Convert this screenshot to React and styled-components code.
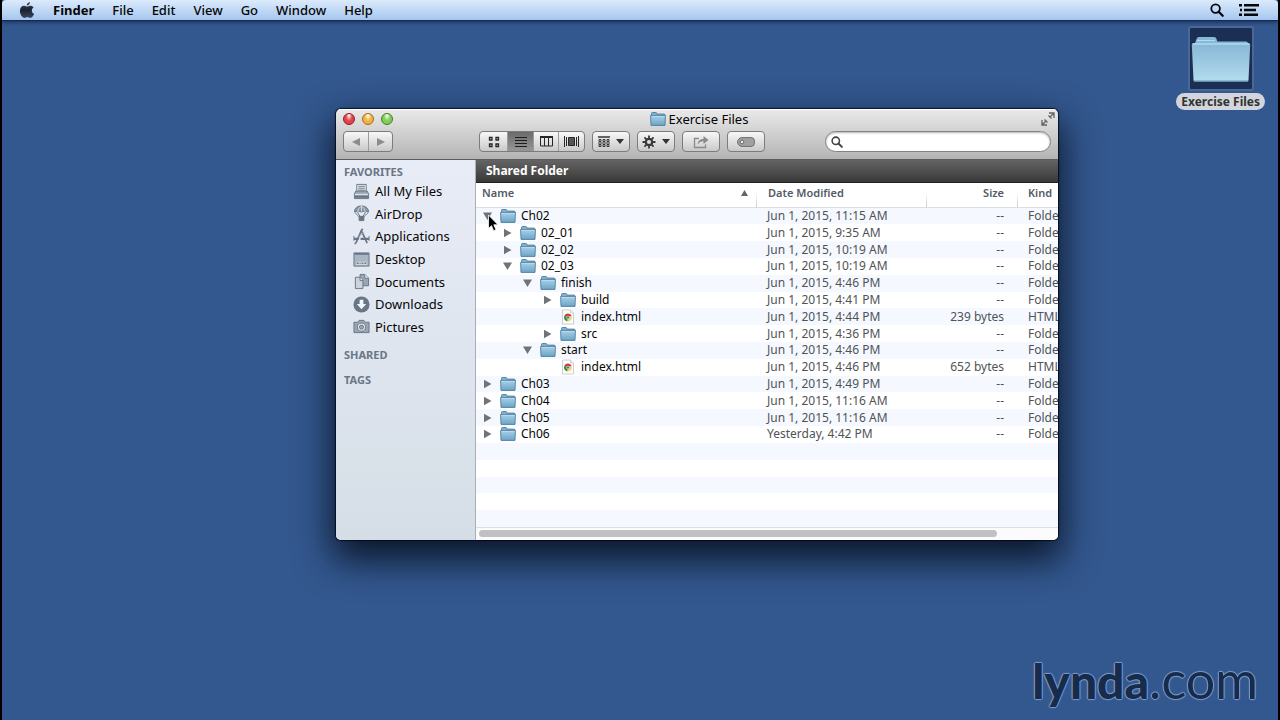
import React from 'react';
import styled, { createGlobalStyle } from 'styled-components';

const menus = ['File', 'Edit', 'View', 'Go', 'Window', 'Help'];

const favorites = [
  { name: 'All My Files', icon: 'allfiles' },
  { name: 'AirDrop', icon: 'airdrop' },
  { name: 'Applications', icon: 'apps' },
  { name: 'Desktop', icon: 'desktop' },
  { name: 'Documents', icon: 'documents' },
  { name: 'Downloads', icon: 'downloads' },
  { name: 'Pictures', icon: 'pictures' }
];

const files = [
  { name: 'Ch02', depth: 0, open: true, date: 'Jun 1, 2015, 11:15 AM' },
  { name: '02_01', depth: 1, date: 'Jun 1, 2015, 9:35 AM' },
  { name: '02_02', depth: 1, date: 'Jun 1, 2015, 10:19 AM' },
  { name: '02_03', depth: 1, open: true, date: 'Jun 1, 2015, 10:19 AM' },
  { name: 'finish', depth: 2, open: true, date: 'Jun 1, 2015, 4:46 PM' },
  { name: 'build', depth: 3, date: 'Jun 1, 2015, 4:41 PM' },
  { name: 'index.html', depth: 3, size: '239 bytes', date: 'Jun 1, 2015, 4:44 PM' },
  { name: 'src', depth: 3, date: 'Jun 1, 2015, 4:36 PM' },
  { name: 'start', depth: 2, open: true, date: 'Jun 1, 2015, 4:46 PM' },
  { name: 'index.html', depth: 3, size: '652 bytes', date: 'Jun 1, 2015, 4:46 PM' },
  { name: 'Ch03', depth: 0, date: 'Jun 1, 2015, 4:49 PM' },
  { name: 'Ch04', depth: 0, date: 'Jun 1, 2015, 11:16 AM' },
  { name: 'Ch05', depth: 0, date: 'Jun 1, 2015, 11:16 AM' },
  { name: 'Ch06', depth: 0, date: 'Yesterday, 4:42 PM' }
];

// blank striped rows under the last file
const blankRows = [0, 1, 2, 3, 4];

const Folder = ({ size }) => (
  <svg width={size} height={size} viewBox="0 0 16 16" aria-hidden="true">
    <path d="M1.500 4V2.500q0-1 1-1h3.300q.8 0 1 .9l.2.7h7q1 0 1 1v1H1.500z" fill="#7fb0cf" stroke="#4c7c9d" strokeWidth=".9" />
    <path d="M.6 4.500h14.800l-.4 9.900H1z" fill="url(#folderFill)" stroke="#4c7c9d" strokeWidth=".9" />
    <path d="M1.300 5.300h13.400" stroke="#c9e4f2" strokeWidth=".7" />
  </svg>
);

const HtmlFile = () => (
  <svg width="16" height="16" viewBox="0 0 16 16" aria-hidden="true">
    <path d="M2.500 1h8l3 3v11h-11z" fill="#fdfdfd" stroke="#c4c4c4" strokeWidth=".8" />
    <path d="M10.500 1v3h3" fill="#eee" stroke="#c4c4c4" strokeWidth=".7" />
    <path d="M8 8.500L4.500 6.500A4 4 0 0 1 11.600 6.800z" fill="#c93a2b" />
    <path d="M8 8.500L4.500 6.500A4 4 0 0 0 7.500 12.400z" fill="#3c8a44" />
    <path d="M8 8.500l3.600-1.700a4 4 0 0 1-4.100 5.600z" fill="#f3d36c" />
    <circle cx="8" cy="8.500" r="1.500" fill="#4a6f9c" stroke="#fff" strokeWidth=".5" />
  </svg>
);

const Search = ({ size, color }) => (
  <svg width={size} height={size} viewBox="0 0 14 14" fill="none" stroke={color} aria-hidden="true">
    <circle cx="5.600" cy="5.600" r="4.300" strokeWidth="1.800" />
    <path d="M8.700 8.700l4 4" strokeWidth="2.300" strokeLinecap="round" />
  </svg>
);

const sideIcons = {
  allfiles: (
    <g fill="none" stroke="#687585">
      <path d="M4 1.500h10v8H4z" fill="#edf1f5" />
      <path d="M5.500 3.500h7M5.500 5.500h7M5.500 7.500h7" />
      <path d="M3 8.500l-1.500 3v5h15v-5l-1.500-3z" fill="#98a5b4" />
      <path d="M2 12h14" stroke="#edf1f5" />
      <path d="M2 14.500h14" strokeWidth="2" />
    </g>
  ),
  airdrop: (
    <g fill="none" stroke="#687585">
      <path d="M1.500 7.500C1.500 3 5 1 9 1s7.500 2 7.500 6.500q-2-1.500-3.600 0Q11 6 9 7.500 7 6 5 7.500q-1.500-1.500-3.500 0z" fill="#8794a4" />
      <path d="M9 1Q5 3.500 5 7.500M9 1q4 2.500 4 6.500M9 1v6" stroke="#e6ebf0" strokeWidth=".8" />
      <path d="M2 8l5 5M16 8l-5 5M5 8l3 5M13 8l-3 5" />
      <path d="M6.500 12h5v4.500h-5z" fill="#687585" />
    </g>
  ),
  apps: (
    <g fill="none" stroke="#687585" strokeWidth="1.800">
      <path d="M3 16L9.200 2M8.500 2L15 16" />
      <path d="M1 11.500h5M8 11.500h9" strokeWidth="2.400" />
      <path d="M9 2l1.500-1M2.500 16l-.5 1" />
      <path d="M1 8.500v5M17 8.500v5" strokeWidth="1" />
      <path d="M6 9.500l5-5" stroke="#a7b2be" strokeWidth="1" />
    </g>
  ),
  desktop: (
    <g fill="none" stroke="#687585">
      <path d="M1 2h16v14H1z" fill="#a9b5c1" />
      <path d="M1.500 3h15" strokeWidth="2" />
      <path d="M3 14.500h12l-1-3H4z" fill="#dce3e9" stroke="none" />
      <path d="M4 13h2M7 13h1M9 13h2M12 13h2" strokeWidth="1.500" />
    </g>
  ),
  documents: (
    <g stroke="#687585">
      <path d="M7.500 1.500h5l4 4v8h-9z" fill="#98a5b4" />
      <path d="M12.500 1.500v4h4" fill="#edf1f5" />
      <path d="M2.500 4.500h5l3 3v9h-8z" fill="#cbd3dc" />
      <path d="M7.500 4.500v3.500h3" fill="#edf1f5" />
    </g>
  ),
  downloads: (
    <g>
      <circle cx="9" cy="9" r="8.500" fill="#687585" />
      <path d="M7 4h4v4.500h3L9 14 4 8.500h3z" fill="#f3f5f8" />
    </g>
  ),
  pictures: (
    <g stroke="#687585">
      <path d="M1 4.500h4l1.500-2h5l1.500 2h4v11H1z" fill="#98a5b4" />
      <circle cx="9" cy="9.700" r="4.300" fill="#e4e9ee" />
      <circle cx="9" cy="9.700" r="2.200" fill="#98a5b4" />
    </g>
  )
};

const App = () => (
  <Desktop>
    <GlobalStyle />
    <Defs width="0" height="0" aria-hidden="true">
      <defs>
        <linearGradient id="folderFill" x1="0" y1="0" x2="0" y2="1">
          <stop offset="0" stopColor="#a9d1e8" />
          <stop offset="1" stopColor="#6ca4c6" />
        </linearGradient>
        <linearGradient id="bigFolder" x1="0" y1="0" x2="0" y2="1">
          <stop offset="0" stopColor="#86b7d6" />
          <stop offset="1" stopColor="#b3dcee" />
        </linearGradient>
        <linearGradient id="appleFill" x1="0" y1="0" x2="0" y2="1">
          <stop offset="0" stopColor="#39465c" />
          <stop offset=".5" stopColor="#1b2333" />
          <stop offset="1" stopColor="#3a465e" />
        </linearGradient>
      </defs>
    </Defs>

    <MenuBar>
      <Apple type="button" aria-label="Apple">
        <svg width="16" height="18" viewBox="0 0 16 18">
          <path d="M10.900 1c.2 1.800-1.300 3.600-3.100 3.600C7.600 2.900 9.200 1.200 10.900 1zM8.200 5.600c.7 0 1.600-.9 3.100-.9 1.400 0 2.600.7 3.300 1.700-2.700 1.600-2.200 5.400.6 6.400-.6 1.700-2.200 4.200-3.800 4.200-1.200 0-1.600-.7-3-.7s-1.900.7-3 .7C3.300 17 .9 13.100.9 10c0-3.300 2.100-5.200 4.200-5.200 1.400 0 2.400.8 3.100.8z" fill="url(#appleFill)" />
        </svg>
      </Apple>
      <MenuItem type="button" $bold>Finder</MenuItem>
      {menus.map((menu) => (
        <MenuItem type="button" key={menu}>{menu}</MenuItem>
      ))}
      <MenuExtras>
        <IconButton type="button" aria-label="Spotlight"><Search size={14} color="#05070c" /></IconButton>
        <IconButton type="button" aria-label="Notifications">
          <svg width="20" height="14" viewBox="0 0 20 14" stroke="#05070c" strokeWidth="2.600">
            <path d="M0 2.200h3M5 2.200h15M1 7h2M5 7h12M0 11.800h3M5 11.800h14" />
          </svg>
        </IconButton>
      </MenuExtras>
    </MenuBar>

    <DesktopIcon href="#exercise-files">
      <IconFrame>
        <svg width="60" height="46" viewBox="0 0 60 46" aria-hidden="true">
          <path d="M3 10L5.500 3Q6 1 8 1h15q2 0 2.500 2l.8 2.500H55q2 0 2 2V12H3z" fill="#86b9d7" />
          <path d="M6 4.500h18" stroke="#b7dbed" />
          <path d="M.8 8.500Q.8 7 2.500 7h55q1.700 0 1.700 1.500L57.500 44q0 1.500-1.500 1.500H4q-1.500 0-1.500-1.500z" fill="url(#bigFolder)" />
          <path d="M2 8h56" stroke="#cbe8f5" />
          <path d="M3 45h54" stroke="#6593b1" />
        </svg>
      </IconFrame>
      <IconLabel>Exercise Files</IconLabel>
    </DesktopIcon>

    <Window>
      <WindowHeader>
        <TitleRow>
          <Lights>
            <Light type="button" aria-label="Close" $color="#e2434b" $edge="#8d2229" />
            <Light type="button" aria-label="Minimize" $color="#f3b23f" $edge="#a06c1c" />
            <Light type="button" aria-label="Zoom" $color="#7fce55" $edge="#467f2b" />
          </Lights>
          <Title><Folder size={16} />Exercise Files</Title>
          <FullScreen type="button" aria-label="Full screen">
            <svg width="14" height="14" viewBox="0 0 14 14" fill="none" stroke="#636363" strokeWidth="1.300">
              <path d="M8 1h5v5M13 1L8.500 5.500M7.500 3.500l3 3" />
              <path d="M1 8v5h5M1 13l4.500-4.500M3.500 7.500l3 3" />
            </svg>
          </FullScreen>
        </TitleRow>
        <Toolbar>
          <Group>
            <Segment type="button" aria-label="Back" $width={24}>
              <svg width="10" height="10" viewBox="0 0 10 10"><path d="M9 1v8L1 5z" fill="#8c8c8c" /></svg>
            </Segment>
            <Segment type="button" aria-label="Forward" $width={24}>
              <svg width="10" height="10" viewBox="0 0 10 10"><path d="M1 1v8l8-4z" fill="#8c8c8c" /></svg>
            </Segment>
          </Group>
          <ViewTools>
            <Group>
              <Segment type="button" aria-label="Icon view" $width={27}>
                <svg width="12" height="12" viewBox="0 0 12 12" fill="none" stroke="#262626" strokeWidth="1.300">
                  <path d="M1.500 1.500h2.500v2.500H1.500zM8 1.500h2.500v2.500H8zM1.500 8h2.500v2.500H1.500zM8 8h2.500v2.500H8z" />
                </svg>
              </Segment>
              <Segment type="button" aria-label="List view" aria-pressed="true" $width={26} $active>
                <svg width="12" height="12" viewBox="0 0 12 12" stroke="#1d1d1d"><path d="M0 1.500h12M0 4.500h12M0 7.500h12M0 10.500h12" /></svg>
              </Segment>
              <Segment type="button" aria-label="Column view" $width={25}>
                <svg width="13" height="11" viewBox="0 0 13 11" fill="none" stroke="#262626">
                  <path d="M.5 1h12v9H.5zM4.500 1v9M8.500 1v9" />
                  <path d="M0 1h13" strokeWidth="2" />
                </svg>
              </Segment>
              <Segment type="button" aria-label="Cover flow" $width={26}>
                <svg width="15" height="11" viewBox="0 0 15 11" stroke="#262626">
                  <path d="M.5 0v11M2.500 1v9M12.500 1v9M14.500 0v11" />
                  <path d="M4.500 1.500h6v8h-6z" fill="#555" />
                </svg>
              </Segment>
            </Group>
            <ToolButton type="button" aria-label="Arrange">
              <svg width="12" height="12" viewBox="0 0 12 12" fill="none" stroke="#333">
                <path d="M0 1h12" strokeWidth="1.500" />
                <path d="M1 3.500h2v2H1zM5 3.500h2v2H5zM9 3.500h2v2H9zM1 8.500h2v2H1zM5 8.500h2v2H5zM9 8.500h2v2H9zM0 7h12" />
              </svg>
              <Caret />
            </ToolButton>
            <ToolButton type="button" aria-label="Action">
              <svg width="14" height="14" viewBox="0 0 14 14" fill="none" stroke="#3a3a3a">
                <circle cx="7" cy="7" r="3.200" strokeWidth="2.200" />
                <path d="M7 .5v3M7 10.500v3M.5 7h3M10.500 7h3M2.400 2.400l2 2M9.600 9.600l2 2M2.400 11.600l2-2M9.600 4.400l2-2" strokeWidth="1.800" />
              </svg>
              <Caret />
            </ToolButton>
            <ToolButton type="button" aria-label="Share">
              <svg width="16" height="14" viewBox="0 0 16 14" fill="none" stroke="#8a8a8a">
                <path d="M6 3.500H1.500v9h11v-3" strokeWidth="1.300" />
                <path d="M4.500 9.500Q5 4 10.500 4V1L15.500 5l-5 4V6.300Q7 6 4.500 9.500z" fill="#8a8a8a" stroke="none" />
              </svg>
            </ToolButton>
            <ToolButton type="button" aria-label="Edit tags">
              <svg width="18" height="10" viewBox="0 0 18 10" stroke="#6e6e6e">
                <path d="M5 .6h9q3.400 0 3.400 3v2.800q0 3-3.400 3H5A4.400 4.400 0 0 1 5 .6z" fill="#a0a0a0" />
                <circle cx="5" cy="5" r="1.800" fill="#eee" />
              </svg>
            </ToolButton>
          </ViewTools>
          <SearchField>
            <Search size={12} color="#444" />
            <SearchInput type="search" aria-label="Search" />
          </SearchField>
        </Toolbar>
      </WindowHeader>

      <WindowBody>
        <Sidebar>
          <SideHeading>FAVORITES</SideHeading>
          <SideList>
            {favorites.map((item) => (
              <SideItem key={item.name}>
                <SideLink href={`#${item.icon}`}>
                  <svg width="17" height="17" viewBox="0 0 18 18" aria-hidden="true">{sideIcons[item.icon]}</svg>
                  {item.name}
                </SideLink>
              </SideItem>
            ))}
          </SideList>
          <SideHeading $spaced>SHARED</SideHeading>
          <SideHeading $spaced>TAGS</SideHeading>
        </Sidebar>
        <Content>
          <PathBar>Shared Folder</PathBar>
          <FileTable>
            <colgroup>
              <col />
              <Col $width={170} />
              <Col $width={91} />
              <Col $width={41} />
            </colgroup>
            <thead>
              <tr>
                <HeadCell $inset={6}>
                  <HeadSort>
                    Name
                    <svg width="7" height="6" viewBox="0 0 7 6" aria-hidden="true"><path d="M3.500 0L7 6H0z" fill="#62666c" /></svg>
                  </HeadSort>
                </HeadCell>
                <HeadCell $inset={12} $divided>Date Modified</HeadCell>
                <HeadCell $right $divided>Size</HeadCell>
                <HeadCell $inset={11} $divided>Kind</HeadCell>
              </tr>
            </thead>
            <tbody>
              {files.map((file, i) => (
                <Row key={i}>
                  <Cell>
                    <NameCell $depth={file.depth}>
                      {file.size ? <NoToggle /> : (
                        <Toggle type="button" aria-label={file.name} aria-expanded={!!file.open}>
                          <svg width="9" height="10" viewBox="0 0 9 10">
                            <path d={file.open ? 'M0 1.500h9L4.500 9z' : 'M1 .8v8.400L8.500 5z'} fill="#707377" />
                          </svg>
                        </Toggle>
                      )}
                      {file.size ? <HtmlFile /> : <Folder size={16} />}
                      {file.name}
                    </NameCell>
                  </Cell>
                  <Cell $detail $inset={11}>{file.date}</Cell>
                  <Cell $detail $right>{file.size || '--'}</Cell>
                  <Cell $detail $inset={11}>{file.size ? 'HTML' : 'Folder'}</Cell>
                </Row>
              ))}
              {blankRows.map((n) => (
                <Row key={`blank${n}`}>
                  <Cell colSpan="4">&nbsp;</Cell>
                </Row>
              ))}
            </tbody>
          </FileTable>
          <ScrollTrack>
            <ScrollThumb />
          </ScrollTrack>
        </Content>
      </WindowBody>
    </Window>

    <Cursor width="14" height="20" viewBox="0 0 14 20" aria-hidden="true">
      <path d="M3.500 1v13.500l3-2.800 2.100 5 2.400-1-2.200-4.900h4.200z" fill="#000" stroke="#fff" strokeWidth=".8" />
    </Cursor>

    <Watermark><strong>lynda</strong><span>.com</span></Watermark>
  </Desktop>
);

const GlobalStyle = createGlobalStyle`
  * {
    box-sizing: border-box;
  }
  body {
    margin: 0;
    font-family: "Noto Sans", "Open Sans", sans-serif;
    font-size: 13px;
    color: #050505;
  }
  button {
    font: inherit;
    color: inherit;
    margin: 0;
    padding: 0;
    border: 0;
    background: none;
  }
  svg {
    display: block;
    flex: none;
  }
`;

const Defs = styled.svg`
  position: absolute;
`;

const Desktop = styled.div`
  position: relative;
  min-height: 100vh;
  overflow: hidden;
  background: #33588f;
  border: solid #000;
  border-width: 0 2px;
`;

const MenuBar = styled.nav`
  display: flex;
  align-items: center;
  gap: 18px;
  height: 21px;
  padding: 0 19px 0 17px;
  background: linear-gradient(#dcebfc, #a5c6ef);
  border-bottom: 1px solid #16294a;
  border-radius: 4px 4px 0 0;
  box-shadow: 0 1px 4px rgba(10, 25, 60, 0.7);
`;

const Apple = styled.button`
  display: flex;
`;

const MenuItem = styled.button`
  line-height: 18px;
  font-weight: ${(props) => (props.$bold ? 700 : 500)};
`;

const MenuExtras = styled.div`
  display: flex;
  align-items: center;
  gap: 15px;
  margin-left: auto;
`;

const IconButton = styled.button`
  display: flex;
`;

const DesktopIcon = styled.a`
  position: absolute;
  top: 26px;
  right: 13px;
  display: flex;
  flex-direction: column;
  align-items: center;
  gap: 2px;
  color: #333;
  text-decoration: none;
`;

const IconFrame = styled.span`
  display: flex;
  align-items: center;
  justify-content: center;
  width: 66px;
  height: 65px;
  background: #1a2f53;
  border: 2px solid #4a6796;
  border-radius: 3px;
`;

const IconLabel = styled.span`
  padding: 0 5px;
  line-height: 17px;
  font-size: 12px;
  font-weight: 700;
  background: #d2d6dc;
  border-radius: 9px;
`;

const Window = styled.main`
  position: absolute;
  top: 109px;
  left: 334px;
  right: 220px;
  overflow: hidden;
  border-radius: 5px;
  box-shadow: 0 0 1px 1px rgba(0, 5, 20, 0.8), 0 16px 36px 4px rgba(4, 10, 25, 0.85);
`;

const WindowHeader = styled.header`
  padding-bottom: 7px;
  background: linear-gradient(#eaeaea, #b4b4b4);
  border-bottom: 1px solid #5c5c5c;
  box-shadow: inset 0 1px 0 #fff;
`;

const TitleRow = styled.div`
  display: grid;
  grid-template-columns: 1fr auto 1fr;
  align-items: center;
  height: 20px;
  margin-bottom: 2px;
  padding: 0 3px 0 7px;
`;

const Lights = styled.div`
  display: flex;
  gap: 7px;
`;

const Light = styled.button`
  width: 12px;
  height: 12px;
  border: 1px solid ${(props) => props.$edge};
  border-radius: 50%;
  background: radial-gradient(ellipse at 50% 15%, #fff 0, rgba(255, 255, 255, 0.2) 35%, transparent 50%), ${(props) => props.$color};
`;

const Title = styled.div`
  display: flex;
  align-items: center;
  gap: 3px;
  line-height: 20px;
`;

const FullScreen = styled.button`
  justify-self: end;
`;

const Toolbar = styled.div`
  display: flex;
  align-items: center;
  padding: 0 7px;
`;

const Group = styled.div`
  display: flex;
  height: 21px;
  overflow: hidden;
  border: 1px solid #7c7c7c;
  border-radius: 4px;
  background: linear-gradient(#f8f8f8, #c9c9c9);
`;

const Segment = styled.button`
  display: flex;
  align-items: center;
  justify-content: center;
  width: ${(props) => props.$width}px;
  background: ${(props) => (props.$active ? 'linear-gradient(#6a6a6a, #979797)' : 'none')};

  & + & {
    border-left: 1px solid #9c9c9c;
  }
`;

const ViewTools = styled.div`
  display: flex;
  gap: 7px;
  margin-left: 86px;
`;

const ToolButton = styled.button`
  display: flex;
  align-items: center;
  justify-content: center;
  gap: 6px;
  width: 38px;
  height: 21px;
  border: 1px solid #7c7c7c;
  border-radius: 4px;
  background: linear-gradient(#f8f8f8, #c9c9c9);
`;

const Caret = styled.span`
  border: solid transparent;
  border-width: 5px 4px 0;
  border-top-color: #333;
`;

const SearchField = styled.label`
  display: flex;
  align-items: center;
  gap: 6px;
  width: 226px;
  height: 21px;
  margin-left: auto;
  padding: 0 5px;
  background: #fff;
  border: 1px solid #828282;
  border-radius: 11px;
  box-shadow: inset 0 1px 2px rgba(0, 0, 0, 0.3);
`;

const SearchInput = styled.input`
  flex: 1;
  min-width: 0;
  padding: 0;
  border: 0;
  outline: 0;
  background: none;
  font-size: 12px;
`;

const WindowBody = styled.div`
  display: flex;
  background: #fff;
`;

const Sidebar = styled.aside`
  flex: none;
  width: 140px;
  padding: 3px 8px;
  background: linear-gradient(#e8ecf6, #d5dee6);
  border-right: 1px solid #a9aeb4;
`;

const SideHeading = styled.h2`
  margin: ${(props) => (props.$spaced ? '8px 0 0' : '0')};
  line-height: 17px;
  font-size: 11px;
  font-weight: 700;
  color: #6b7584;
`;

const SideList = styled.ul`
  display: flex;
  flex-direction: column;
  height: 158px;
  margin: 0;
  padding: 0 0 0 9px;
  list-style: none;
`;

const SideItem = styled.li`
  display: flex;
  flex: 1;
`;

const SideLink = styled.a`
  display: flex;
  align-items: center;
  gap: 5px;
  white-space: nowrap;
  color: inherit;
  text-decoration: none;
`;

const Content = styled.section`
  flex: 1;
  min-width: 0;
`;

const PathBar = styled.h1`
  margin: 0;
  padding: 0 10px;
  line-height: 22px;
  font-size: 12px;
  font-weight: 700;
  color: #fff;
  background: linear-gradient(#646464, #393939);
  border-bottom: 1px solid #222;
`;

const FileTable = styled.table`
  width: 100%;
  height: 344px;
  table-layout: fixed;
  border-collapse: collapse;
  font-size: 12px;
`;

const Col = styled.col`
  width: ${(props) => props.$width}px;
`;

const HeadCell = styled.th`
  height: 24px;
  padding: 0 ${(props) => (props.$right ? 13 : 0)}px 4px ${(props) => props.$inset || 0}px;
  overflow: hidden;
  text-align: ${(props) => (props.$right ? 'right' : 'left')};
  font-size: 11px;
  font-weight: 600;
  color: #525b66;
  white-space: nowrap;
  background: ${(props) => (props.$divided ? 'linear-gradient(#fff, #c8ccd0) left bottom / 1px 15px no-repeat' : 'none')};
  border-bottom: 1px solid #dcdfe2;
`;

const HeadSort = styled.span`
  display: flex;
  align-items: center;
  justify-content: space-between;
  padding-right: 8px;
`;

const Row = styled.tr`
  &:nth-child(odd) {
    background: #f5f9ff;
  }
`;

const Cell = styled.td`
  padding: 0 ${(props) => (props.$right ? 13 : 0)}px 0 ${(props) => props.$inset || 0}px;
  overflow: hidden;
  line-height: 16px;
  text-align: ${(props) => (props.$right ? 'right' : 'left')};
  white-space: nowrap;
  color: ${(props) => (props.$detail ? '#505356' : 'inherit')};
`;

const NameCell = styled.div`
  display: flex;
  align-items: center;
  gap: 5px;
  padding-left: ${(props) => 7 + props.$depth * 20}px;
`;

const Toggle = styled.button`
  display: flex;
  width: 12px;
`;

const NoToggle = styled.span`
  width: 12px;
`;

const ScrollTrack = styled.div`
  height: 13px;
  padding: 2px 3px;
  background: #fbfbfb;
  border-top: 1px solid #dedede;
`;

const ScrollThumb = styled.div`
  width: 90%;
  height: 7px;
  border-radius: 4px;
  background: #c1c1c1;
`;

const Cursor = styled.svg`
  position: absolute;
  top: 214px;
  left: 483px;
`;

const Watermark = styled.div`
  position: absolute;
  right: 20px;
  bottom: 9px;
  display: flex;
  align-items: baseline;
  font-family: Lato, sans-serif;
  font-size: 48px;
  line-height: 60px;
  color: #172b4d;
  text-shadow: 0 0 1px #7f9cc8, 1px 0 1px #7f9cc8, -1px 0 1px #7f9cc8, 0 1px 1px #7f9cc8, 0 -1px 1px #7f9cc8;

  strong {
    font-weight: 900;
  }
  span {
    font-size: 52px;
    font-weight: 400;
  }
`;

export default App;
